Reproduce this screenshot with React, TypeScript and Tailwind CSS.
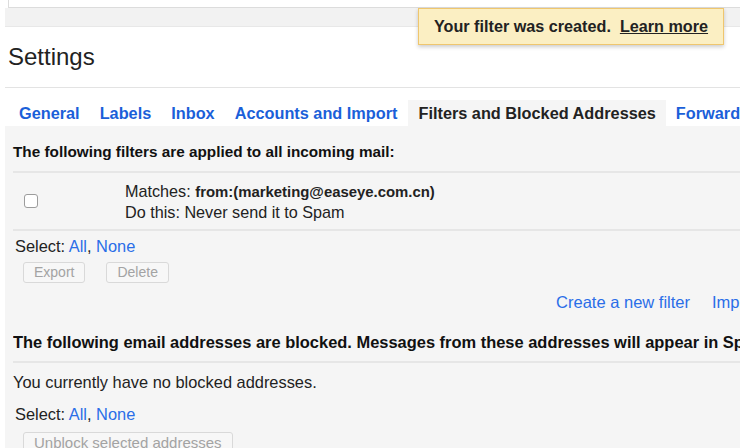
import React from "react";

const TABS = ["General", "Labels", "Inbox", "Accounts and Import"];

const Btn: React.FC<{ label: string; className?: string }> = ({ label, className = "" }) => (
  <button
    className={`h-[21px] rounded-[3px] border border-[#d9d9d9] bg-[#f7f7f7] px-[10px] text-[14px] leading-[19px] text-[#a3a3a3] ${className}`}
  >
    {label}
  </button>
);

const Select: React.FC = () => (
  <div className="text-[16.4px] leading-[18px] text-[#222]">
    Select: <span className="text-[#2a6ee8]">All</span>, <span className="text-[#2a6ee8]">None</span>
  </div>
);

export default function App() {
  return (
    <div
      className="relative h-[448px] w-[750px] overflow-hidden bg-white"
      style={{ fontFamily: '"Liberation Sans", Arial, sans-serif' }}
    >
      {/* search bar remnant */}
      <div className="ml-[8px] mr-[10px] h-[8px] border-b border-l border-[#dcdcdc] bg-white" />
      <div className="ml-[5px] mr-[10px] h-[19px] border-b border-[#e8e8e8] bg-[#f2f2f2]" />

      {/* toast */}
      <div className="absolute left-[418px] top-[8px] flex h-[37px] w-[306px] items-center justify-center whitespace-nowrap border border-[#efc66e] bg-[#fbefc3] text-[16.2px] font-bold text-[#222] shadow-[0_2px_4px_rgba(0,0,0,0.2)]">
        Your filter was created.&nbsp;&nbsp;<span className="underline">Learn more</span>
      </div>

      <div className="ml-[5px] mr-[10px]">
        <div className="border-b border-[#e3e3e3] pb-[17px] pl-[3px] pt-[17px] text-[24px] leading-[26px] text-[#222]">
          Settings
        </div>

        {/* tabs */}
        <div className="mt-[12px] flex h-[26px] items-end overflow-hidden whitespace-nowrap text-[16.3px] font-bold leading-[26px]">
          <div className="flex flex-none gap-[20px] pl-[14px] pr-[11px] text-[#1b5fd9]">
            {TABS.map((t) => (
              <span key={t}>{t}</span>
            ))}
          </div>
          <div className="flex-none bg-[#f5f5f5] px-[10px] text-[#222]">Filters and Blocked Addresses</div>
          <div className="flex-none pl-[10px] text-[#1b5fd9]">Forwarding and POP/IMAP</div>
        </div>

        {/* panel */}
        <div className="h-[400px] bg-[#f5f5f5] pl-[8px]">
          <div className="border-b-2 border-[#e6e6e6] pb-[10px] pt-[17px] text-[15.3px] font-bold leading-[18px] text-[#111]">
            The following filters are applied to all incoming mail:
          </div>
          <div className="flex h-[58px] items-center border-b-2 border-[#e6e6e6]">
            <div className="ml-[11px] h-[14px] w-[14px] flex-none rounded-[3px] border border-[#9c9c9c] bg-white" />
            <div className="ml-[87px] whitespace-nowrap text-[16.2px] leading-[20px] text-[#222]">
              <div>
                Matches: <b className="text-[14.9px]">from:(marketing@easeye.com.cn)</b>
              </div>
              <div>Do this: Never send it to Spam</div>
            </div>
          </div>
          <div className="pl-[2px] pt-[6px]">
            <Select />
            <div className="mt-[7px] flex gap-[21px] pl-[8px]">
              <Btn label="Export" />
              <Btn label="Delete" />
            </div>
          </div>
          <div className="mt-[9px] flex justify-end gap-[22px] whitespace-nowrap text-[16.5px] leading-[20px] text-[#2a6ee8]">
            <span>Create a new filter</span>
            <span className="w-[28px] overflow-hidden">Import filters</span>
          </div>
          <div className="mt-[21px] overflow-hidden whitespace-nowrap border-b-2 border-[#e6e6e6] pb-[10px] text-[16.45px] font-bold leading-[18px] text-[#111]">
            The following email addresses are blocked. Messages from these addresses will appear in Spam:
          </div>
          <div className="pt-[10px] text-[16.4px] leading-[18px] text-[#222]">
            You currently have no blocked addresses.
          </div>
          <div className="pl-[2px] pt-[14px]">
            <Select />
            <div className="mt-[8px] pl-[8px]">
              <Btn label="Unblock selected addresses" className="text-[15px]" />
            </div>
          </div>
        </div>
      </div>
    </div>
  );
}
